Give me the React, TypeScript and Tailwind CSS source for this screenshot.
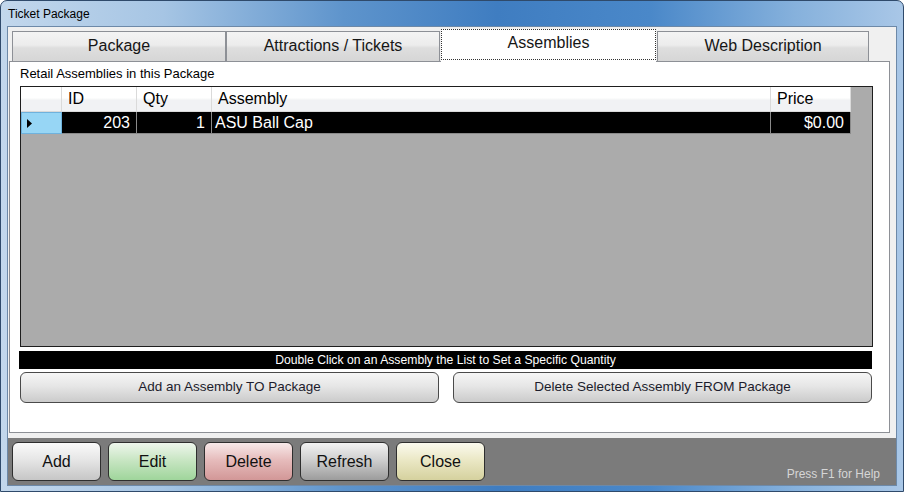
import React from "react";

type Column = {
  key: string;
  label: string;
  width: string;
  align: "left" | "right";
};

const columns: Column[] = [
  { key: "id", label: "ID", width: "w-[75px]", align: "right" },
  { key: "qty", label: "Qty", width: "w-[75px]", align: "right" },
  { key: "assembly", label: "Assembly", width: "w-[559px]", align: "left" },
  { key: "price", label: "Price", width: "w-[80px]", align: "right" },
];

const rows = [{ id: "203", qty: "1", assembly: "ASU Ball Cap", price: "$0.00" }];

const tabs = ["Package", "Attractions / Tickets", "Assemblies", "Web Description"];

const footerButtons = [
  { label: "Add", tone: "bg-[linear-gradient(180deg,#fafafa_0%,#e6e6e6_45%,#c6c6c6_100%)]" },
  { label: "Edit", tone: "bg-[linear-gradient(180deg,#eef6ec_0%,#c9e6c4_45%,#9fd59b_100%)]" },
  { label: "Delete", tone: "bg-[linear-gradient(180deg,#f7e9e9_0%,#e6bcbc_45%,#d29797_100%)]" },
  { label: "Refresh", tone: "bg-[linear-gradient(180deg,#f2f2f2_0%,#cfcfcf_45%,#9c9c9c_100%)]" },
  { label: "Close", tone: "bg-[linear-gradient(180deg,#fbfaee_0%,#ebe8c6_45%,#d5d19e_100%)]" },
];

function Tab({ label, selected, width }: { label: string; selected: boolean; width: string }) {
  if (selected) {
    return (
      <div className={`relative z-10 -mb-px ml-px h-[33px] bg-white ${width}`}>
        <div className="flex h-[31px] items-center justify-center border border-dotted border-[#333] pb-[4px] text-[16px] text-[#161616]">
          {label}
        </div>
      </div>
    );
  }
  return (
    <div
      className={`flex h-[30px] items-center justify-center border border-b-0 border-[#8d9096] bg-[linear-gradient(180deg,#f4f4f4_0%,#ececec_45%,#dedede_55%,#d6d6d6_100%)] pb-[2px] text-[16px] text-[#161616] ${width}`}
    >
      {label}
    </div>
  );
}

export default function App() {
  return (
    <div className="h-[492px] w-[904px] overflow-hidden [font-family:'Liberation_Sans',Arial,sans-serif]">
      <div className="flex h-full w-full flex-col rounded-t-[7px] border border-[#2f4a6b] bg-[linear-gradient(90deg,#c2d7ec_0%,#a6c5e4_18%,#5e94cc_38%,#3f7dc1_55%,#4a88c9_72%,#86b1dc_88%,#a9c7e7_100%)]">
        {/* title bar */}
        <div className="flex h-[26px] items-center pl-[7px] pb-[1px] text-[12px] text-black">
          Ticket Package
        </div>

        {/* client area */}
        <div className="ml-[7px] flex h-[458px] w-[888px] flex-col bg-[#f0f0f0] outline outline-1 outline-[#6d89a8]">
          {/* tabs */}
          <div className="flex h-[34px] items-end pl-[4px]">
            <Tab label={tabs[0]} selected={false} width="w-[214px]" />
            <Tab label={tabs[1]} selected={false} width="w-[214px]" />
            <Tab label={tabs[2]} selected width="w-[215px]" />
            <div className="ml-[1px]">
              <Tab label={tabs[3]} selected={false} width="w-[212px]" />
            </div>
          </div>

          {/* tab page */}
          <div className="ml-px h-[372px] w-[881px] border border-[#8d9096] bg-white">
            <div className="h-[24px] overflow-hidden pl-[10px] pt-[4px] text-[13px] leading-[16px] text-black">
              Retail Assemblies in this Package
            </div>

            {/* grid */}
            <div className="ml-[10px] h-[261px] w-[853px] border border-[#1e1e1e] bg-[#ababab]">
              <div className="flex h-[25px]">
                <div className="w-[41px] border-r border-b border-[#dadada] bg-[linear-gradient(180deg,#ffffff_0%,#ffffff_45%,#f1f2f4_55%,#f1f2f4_100%)]" />
                {columns.map((col) => (
                  <div
                    key={col.key}
                    className={`flex items-center border-r border-b border-[#dadada] bg-[linear-gradient(180deg,#ffffff_0%,#ffffff_45%,#f1f2f4_55%,#f1f2f4_100%)] pl-[6px] pb-px text-[16px] text-black ${col.width}`}
                  >
                    {col.label}
                  </div>
                ))}
              </div>
              {rows.map((row) => (
                <div key={row.id} className="flex h-[22px]">
                  <div className="flex w-[41px] items-center border border-[#6fb2dd] bg-[#97d6f5] pl-[5px]">
                    <svg width="5" height="9" viewBox="0 0 5 9">
                      <path d="M0 0 L5 4.5 L0 9 Z" fill="#000" />
                    </svg>
                  </div>
                  {columns.map((col) => (
                    <div
                      key={col.key}
                      className={`flex items-center border-r border-b border-[#8a8a8a] bg-black text-[16px] text-white ${col.width} ${
                        col.align === "right" ? "justify-end pr-[6px]" : "pl-[3px]"
                      }`}
                    >
                      {row[col.key as keyof typeof row]}
                    </div>
                  ))}
                </div>
              ))}
            </div>

            {/* hint bar */}
            <div className="mt-[4px] ml-[9px] flex h-[18px] w-[853px] items-center justify-center bg-black text-[12.2px] text-white">
              Double Click on an Assembly the List to Set a Specific Quantity
            </div>

            {/* actions */}
            <div className="mt-[3px] ml-[10px] flex gap-[14px]">
              <button className="flex h-[31px] w-[419px] items-center justify-center rounded-[6px] border border-[#4a4a4a] bg-[linear-gradient(180deg,#f6f6f6_0%,#e6e6e6_45%,#cbcbcb_100%)] text-[13.5px] text-[#1c1c2c]">
                Add an Assembly TO Package
              </button>
              <button className="flex h-[31px] w-[419px] items-center justify-center rounded-[6px] border border-[#4a4a4a] bg-[linear-gradient(180deg,#f6f6f6_0%,#e6e6e6_45%,#cbcbcb_100%)] text-[13.5px] text-[#1c1c2c]">
                Delete Selected Assembly FROM Package
              </button>
            </div>
          </div>

          <div className="h-[5px]" />

          {/* footer */}
          <div className="flex h-[47px] items-start bg-[#7b7b7b] pl-[4px] pt-[4px]">
            <div className="flex gap-[7px]">
              {footerButtons.map((b) => (
                <button
                  key={b.label}
                  className={`flex h-[39px] w-[89px] items-center justify-center rounded-[6px] border border-[#2e2e2e] text-[16px] text-[#111] ${b.tone}`}
                >
                  {b.label}
                </button>
              ))}
            </div>
            <div className="ml-auto mt-[23px] pr-[16px] text-[12px] text-[#d6d6d6]">
              Press F1 for Help
            </div>
          </div>
        </div>
      </div>
    </div>
  );
}
